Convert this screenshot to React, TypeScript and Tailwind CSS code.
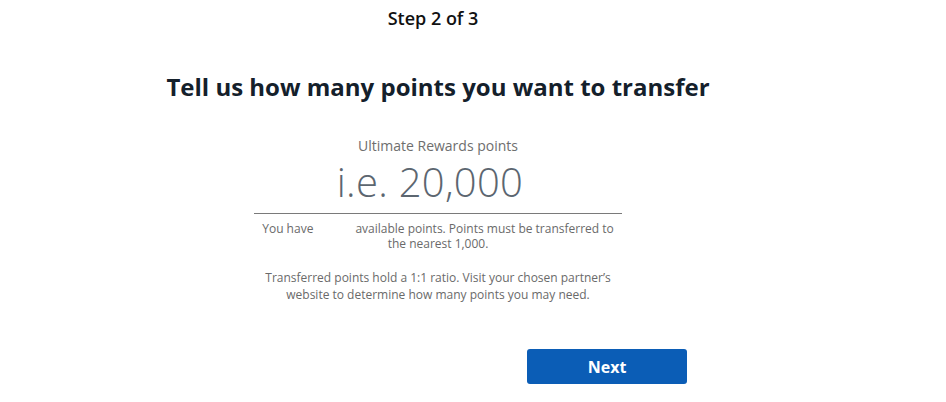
import React from 'react';

export default function App() {
  return (
    <div className="w-[946px] h-[402px] bg-white" style={{ fontFamily: '"Open Sans", "Noto Sans", sans-serif' }}>
      <div className="w-[876px] flex flex-col items-center">
        <div className="mt-[6px] pr-[10px] text-[18px] leading-[24px] font-semibold text-[#111]">Step 2 of 3</div>
        <h1 className="mt-[41px] text-[24px] leading-[32px] font-bold text-[#14202b]">
          Tell us how many points you want to transfer
        </h1>
        <div className="mt-[33px] w-[368px] flex flex-col items-center">
          <div className="text-[14px] leading-[20px] text-[#6e6e6e]">Ultimate Rewards points</div>
          <div className="mt-[1px] pr-[16px] text-[40px] leading-[50px] font-light text-[#5c6670] tracking-[0.3px]">i.e. 20,000</div>
          <div className="mt-[6px] w-full h-px bg-[#7a7a7a]" />
          <p className="mt-[7px] px-[4px] text-center text-[12px] leading-[15px] text-[#6a6a6a]">
            You have<span className="inline-block w-[42px]" />available points. Points must be transferred to the nearest 1,000.
          </p>
          <p className="mt-[18px] px-[4px] text-center text-[12px] leading-[17px] text-[#6a6a6a]">
            Transferred points hold a 1:1 ratio. Visit your chosen partner’s website to determine how many points you may need.
          </p>
        </div>
        <div className="w-[540px] flex justify-end pr-[21px] mt-[46px]">
          <button className="w-[160px] h-[35px] rounded-[3px] bg-[#0b5db6] text-white text-[16px] font-bold">
            Next
          </button>
        </div>
      </div>
    </div>
  );
}
